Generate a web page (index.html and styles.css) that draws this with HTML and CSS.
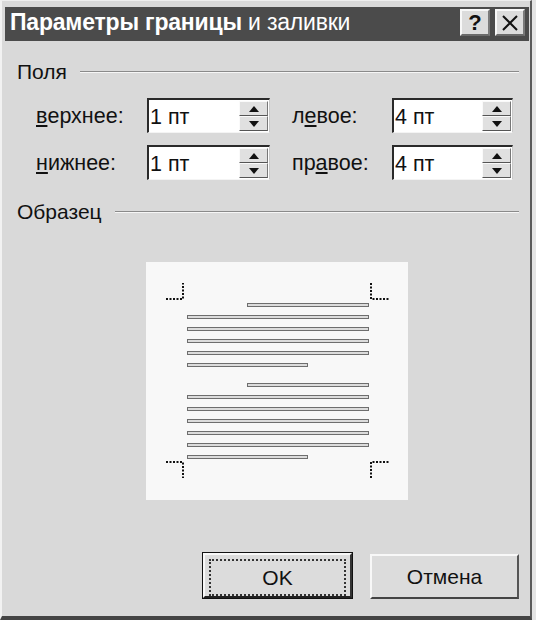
FILE: index.html
```html
<!DOCTYPE html>
<html lang="ru">
<head>
    <meta charset="UTF-8">
    <title>Параметры границы и заливки</title>
    <link rel="stylesheet" href="styles.css">
</head>
<body>
    <div class="window">
        <div class="titlebar">
            <span class="title"><b>Параметры границы</b> и заливки</span>
            <div class="title-btns">
                <span class="tbtn help">?</span>
                <span class="tbtn">
                    <svg width="18" height="18" viewBox="0 0 18 18"><path d="M2 2 L16 16 M16 2 L2 16" stroke="#111" stroke-width="2"/></svg>
                </span>
            </div>
        </div>

        <div class="content">
            <div class="group-head">
                <span>Поля</span>
                <span class="rule"></span>
            </div>

            <div class="fields">
                <label class="lbl"><u>в</u>ерхнее:</label>
                <div class="spin">
                    <span class="val">1 пт</span>
                    <div class="arrows">
                        <span class="arr"><svg width="10" height="6"><polygon points="0,6 5,0 10,6" fill="#111"/></svg></span>
                        <span class="arr"><svg width="10" height="6"><polygon points="0,0 10,0 5,6" fill="#111"/></svg></span>
                    </div>
                </div>
                <label class="lbl lbl-right">л<u>е</u>вое:</label>
                <div class="spin">
                    <span class="val">4 пт</span>
                    <div class="arrows">
                        <span class="arr"><svg width="10" height="6"><polygon points="0,6 5,0 10,6" fill="#111"/></svg></span>
                        <span class="arr"><svg width="10" height="6"><polygon points="0,0 10,0 5,6" fill="#111"/></svg></span>
                    </div>
                </div>

                <label class="lbl"><u>н</u>ижнее:</label>
                <div class="spin">
                    <span class="val">1 пт</span>
                    <div class="arrows">
                        <span class="arr"><svg width="10" height="6"><polygon points="0,6 5,0 10,6" fill="#111"/></svg></span>
                        <span class="arr"><svg width="10" height="6"><polygon points="0,0 10,0 5,6" fill="#111"/></svg></span>
                    </div>
                </div>
                <label class="lbl lbl-right">пр<u>а</u>вое:</label>
                <div class="spin">
                    <span class="val">4 пт</span>
                    <div class="arrows">
                        <span class="arr"><svg width="10" height="6"><polygon points="0,6 5,0 10,6" fill="#111"/></svg></span>
                        <span class="arr"><svg width="10" height="6"><polygon points="0,0 10,0 5,6" fill="#111"/></svg></span>
                    </div>
                </div>
            </div>

            <div class="group-head sample-head">
                <span>Образец</span>
                <span class="rule"></span>
            </div>

            <div class="preview">
                <svg width="262" height="238" viewBox="0 0 262 238">
                    <g fill="none" stroke="#111" stroke-width="2" stroke-dasharray="2 1.5">
                        <path d="M20 37 H37 V21"/>
                        <path d="M225 21 V37 H244"/>
                        <path d="M20 200 H37 V216"/>
                        <path d="M225 216 V200 H244"/>
                    </g>
                    <g fill="#dcdcdc" stroke="#6e6e6e" stroke-width="1">
                        <rect x="101.5" y="41.5" width="121" height="3"/>
                        <rect x="41.5" y="53.5" width="181" height="3"/>
                        <rect x="41.5" y="65.5" width="181" height="3"/>
                        <rect x="41.5" y="77.5" width="181" height="3"/>
                        <rect x="41.5" y="89.5" width="181" height="3"/>
                        <rect x="41.5" y="101.5" width="120" height="3"/>
                        <rect x="101.5" y="121.5" width="121" height="3"/>
                        <rect x="41.5" y="133.5" width="181" height="3"/>
                        <rect x="41.5" y="145.5" width="181" height="3"/>
                        <rect x="41.5" y="157.5" width="181" height="3"/>
                        <rect x="41.5" y="169.5" width="181" height="3"/>
                        <rect x="41.5" y="181.5" width="181" height="3"/>
                        <rect x="41.5" y="193.5" width="120" height="3"/>
                    </g>
                </svg>
            </div>

            <div class="buttons">
                <button class="btn default"><span class="focus">OK</span></button>
                <button class="btn">Отмена</button>
            </div>
        </div>
    </div>
</body>
</html>
```

FILE: styles.css
```css
body {
    margin: 0;
    background-color: #e4e4e4;
    font-family: "Liberation Sans", Arial, sans-serif;
}
.window {
    width: 532px;
    height: 620px;
    box-sizing: border-box;
    background-color: #d9d9d9;
    border-left: 2px solid #f2f2f2;
    border-top: 1px solid #eeeeee;
    border-right: 2px solid #5a5a5a;
    border-bottom: 4px solid #444;
    padding: 6px 1px 0 3px;
}
.titlebar {
    height: 34px;
    background-color: #4b4b4b;
    display: flex;
    align-items: center;
    justify-content: space-between;
    padding: 0 4px 3px 5px;
    box-sizing: border-box;
}
.title {
    color: white;
    font-size: 23px;
    letter-spacing: -0.2px;
}
.title b {
    font-weight: bold;
}
.title-btns {
    display: flex;
    gap: 5px;
}
.tbtn {
    width: 30px;
    height: 27px;
    box-sizing: border-box;
    background-color: #dcdcdc;
    border-top: 2px solid #f8f8f8;
    border-left: 2px solid #f8f8f8;
    border-right: 2px solid #7a7a7a;
    border-bottom: 2px solid #6a6a6a;
    display: flex;
    align-items: center;
    justify-content: center;
    color: #111;
    font-size: 22px;
    font-weight: bold;
}
.content {
    padding: 0 10px 0 12px;
    font-size: 21px;
    color: #111;
}
.group-head {
    display: flex;
    align-items: center;
    gap: 13px;
    margin-top: 19px;
    line-height: 24px;
}
.rule {
    flex: 1;
    height: 0;
    border-top: 1px solid #8a8a8a;
    border-bottom: 1px solid #f6f6f6;
}
.fields {
    display: grid;
    grid-template-columns: 111px 123px 122px 121px;
    grid-auto-rows: 35px;
    row-gap: 12px;
    margin-top: 14px;
    padding-left: 19px;
    font-size: 21.5px;
}
.lbl {
    display: flex;
    align-items: center;
    padding-top: 2px;
}
.lbl-right {
    padding-left: 22px;
}
.spin {
    display: flex;
    align-items: center;
    justify-content: space-between;
    background-color: white;
    border-top: 2px solid #2a2a2a;
    border-left: 2px solid #2a2a2a;
    border-right: 1px solid #c8c8c8;
    border-bottom: 1px solid #f4f4f4;
    padding: 1px 1px 1px 1px;
}
.val {
    padding-top: 2px;
}
.arrows {
    display: flex;
    flex-direction: column;
    width: 29px;
    align-self: stretch;
}
.arr {
    flex: 1;
    display: flex;
    align-items: center;
    justify-content: center;
    background-color: #e0e0e0;
    border-top: 1px solid #fafafa;
    border-left: 1px solid #fafafa;
    border-bottom: 1px solid #555;
    border-right: 1px solid #777;
}
.sample-head {
    margin-top: 20px;
}
.preview {
    width: 262px;
    height: 238px;
    margin: 38px 0 0 129px;
    background-color: #f8f8f8;
}
.preview svg {
    display: block;
}
.buttons {
    display: flex;
    justify-content: flex-end;
    gap: 18px;
    margin-top: 54px;
}
.btn {
    width: 149px;
    height: 45px;
    font-family: "Liberation Sans", Arial, sans-serif;
    font-size: 21px;
    color: #111;
    background-color: #dcdcdc;
    border-top: 2px solid #f8f8f8;
    border-left: 2px solid #f8f8f8;
    border-right: 2px solid #555;
    border-bottom: 2px solid #444;
    padding: 0;
}
.btn.default {
    outline: 1px solid #111;
    outline-offset: 0;
    border-right-color: #333;
    border-bottom-color: #222;
    margin-top: -1px;
}
.focus {
    display: flex;
    align-items: center;
    justify-content: center;
    margin: 4px;
    height: 33px;
    border: 2px dotted #333;
}
```
